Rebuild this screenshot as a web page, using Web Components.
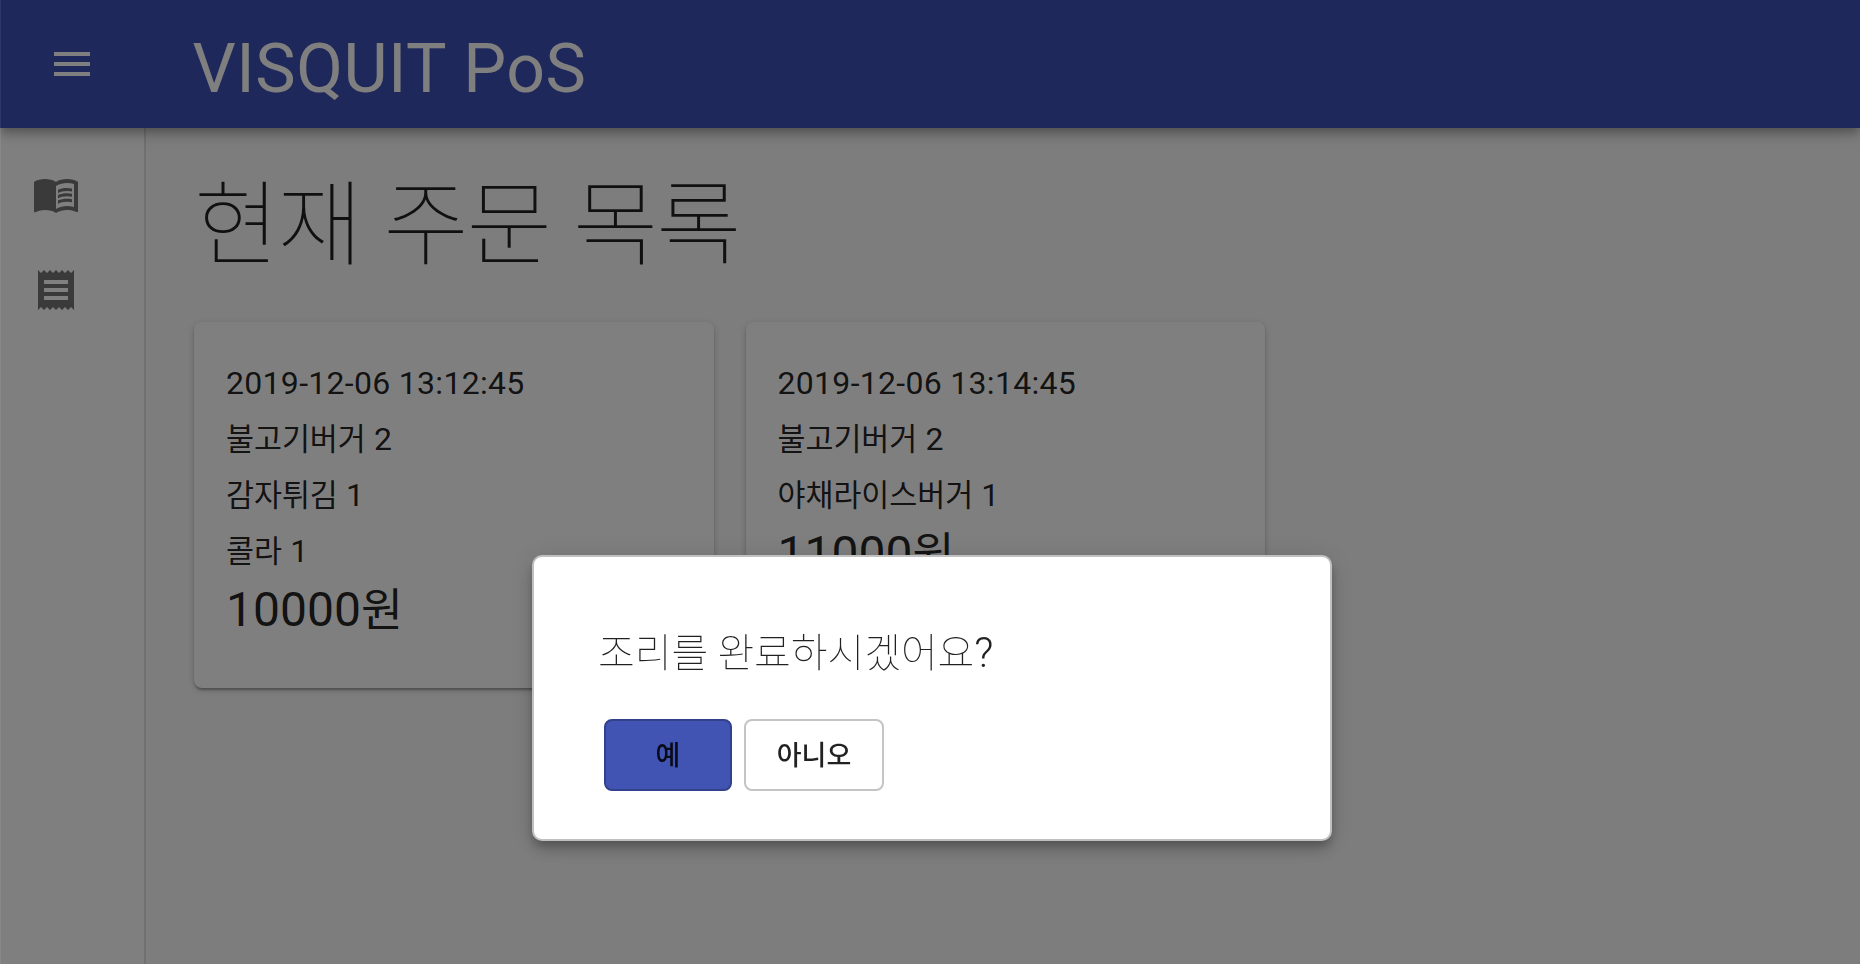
<!DOCTYPE html>
<html lang="ko">
<head>
<meta charset="utf-8">
<title>VISQUIT PoS</title>
<style>
html,body{margin:0;height:100%;overflow:hidden;background:#fafafa}
body{font-family:Roboto,"Noto Sans CJK KR",sans-serif;color:rgba(0,0,0,.87)}
</style>
</head>
<body>
<pos-app>
  <pos-order time="2019-12-06 13:12:45" items="불고기버거:2,감자튀김:1,콜라:1" price="10000"></pos-order>
  <pos-order time="2019-12-06 13:14:45" items="불고기버거:2,야채라이스버거:1" price="11000"></pos-order>
</pos-app>
<pos-dialog>
  <pos-button primary>예</pos-button>
  <pos-button>아니오</pos-button>
</pos-dialog>
<script>
const define = (name, html) => customElements.define(name, class extends HTMLElement {
  constructor() {
    super();
    this.attachShadow({mode: 'open'}).innerHTML = typeof html === 'function' ? '' : html;
  }
  connectedCallback() {
    if (typeof html === 'function') this.shadowRoot.innerHTML = html(this);
  }
});

const icons = {
  menu: '<path d="M3 18h18v-2H3v2zm0-5h18v-2H3v2zm0-7v2h18V6H3z"/>',
  book: '<path fill-rule="evenodd" d="M21 5c-1.11-.35-2.33-.5-3.5-.5-1.95 0-4.05.4-5.5 1.5-1.45-1.1-3.55-1.5-5.5-1.5S2.45 4.9 1 6v14.65c0 .25.25.5.5.5.1 0 .15-.05.25-.05C3.1 20.45 5.05 20 6.5 20c1.95 0 4.05.4 5.5 1.5 1.35-.85 3.8-1.5 5.5-1.5 1.65 0 3.35.3 4.75 1.05.1.05.15.05.25.05.25 0 .5-.25.5-.5V6c-.6-.45-1.25-.75-2-1zm0 13.500c-1.100-.35-2.300-.5-3.500-.5-1.700 0-4.150.65-5.500 1.500V8c1.350-.85 3.800-1.500 5.500-1.500 1.200 0 2.400.15 3.500.5v11.500z"/><path d="M17.500 10.500c.88 0 1.730.09 2.500.26V9.240C19.210 9.090 18.360 9 17.500 9c-1.700 0-3.240.29-4.500.83v1.660c1.130-.64 2.700-.99 4.500-.99zM13 12.490v1.660c1.130-.64 2.700-.99 4.500-.99.88 0 1.730.09 2.500.26V11.900c-.79-.15-1.640-.24-2.500-.24-1.700 0-3.240.3-4.500.83zM17.500 14.330c-1.700 0-3.240.29-4.500.83v1.660c1.130-.64 2.700-.99 4.500-.99.88 0 1.730.09 2.500.26v-1.520c-.79-.16-1.640-.24-2.500-.24z"/>',
  receipt: '<path d="M18 17H6v-2h12v2zm0-4H6v-2h12v2zm0-4H6V7h12v2zM3 22l1.500-1.500L6 22l1.500-1.500L9 22l1.500-1.500L12 22l1.500-1.500L15 22l1.500-1.500L18 22l1.500-1.500L21 22V2l-1.500 1.500L18 2l-1.500 1.500L15 2l-1.500 1.500L12 2l-1.500 1.500L9 2 7.500 3.500 6 2 4.500 3.500 3 2v20z"/>'
};
define('pos-icon', el => `<style>:host{display:block;width:48px;height:48px}svg{display:block;fill:currentColor}</style>
<svg width="48" height="48" viewBox="0 0 24 24">${icons[el.getAttribute('name')]}</svg>`);

define('pos-bar', `<style>
:host{display:flex;align-items:center;height:128px;box-sizing:border-box;padding-left:48px;gap:96.500px;background:#3f51b5;color:#fff;position:relative;z-index:1;
box-shadow:0 4px 8px -2px rgba(0,0,0,.2),0 8px 10px rgba(0,0,0,.14),0 2px 20px rgba(0,0,0,.12)}
h1{margin:0;padding-top:10px;font-weight:400;font-size:68px;line-height:80px;letter-spacing:.00735em}
</style><pos-icon name="menu"></pos-icon><h1>VISQUIT PoS</h1>`);

define('pos-drawer', `<style>
:host{display:flex;flex-direction:column;gap:48px;box-sizing:border-box;width:146px;padding:42px 0 0 32px;background:#fff;border-right:2px solid rgba(0,0,0,.12);color:#757575}
</style><pos-icon name="book"></pos-icon><pos-icon name="receipt"></pos-icon>`);

define('pos-order', el => {
  const rows = el.getAttribute('items').split(',').map(s => s.split(':'));
  return `<style>
:host{display:block;box-sizing:border-box;height:366px;padding:33px 32px 32px;background:#fff;border-radius:8px;
box-shadow:0 2px 6px rgba(0,0,0,.2),0 2px 2px rgba(0,0,0,.14),0 4px 2px -2px rgba(0,0,0,.12)}
p{margin:0;height:56px;line-height:56px;font-size:32px;letter-spacing:.3px;white-space:nowrap}
p.price{height:64px;margin-top:-1px;line-height:64px;font-size:48px;letter-spacing:0}
span{font-family:"Noto Sans CJK KR",sans-serif;font-size:.951em;line-height:1;letter-spacing:-.05px}
</style><p>${el.getAttribute('time')}</p>${rows.map(r => `<p><span>${r[0]}</span> ${r[1]}</p>`).join('')}<p class="price">${el.getAttribute('price')}<span>원</span></p>`;
});

define('pos-app', `<style>
:host{display:flex;flex-direction:column;height:100vh}
.body{flex:1;display:flex}
main{flex:1;padding:46px 48px}
h2{margin:0;height:148px;line-height:88px;font-family:"Noto Sans CJK KR",sans-serif;font-weight:100;font-size:93px;letter-spacing:-2.400px;word-spacing:-.6px;white-space:nowrap}
.grid{display:grid;grid-template-columns:519.500px 519.500px;gap:32px;align-items:start}
</style><pos-bar></pos-bar><div class="body"><pos-drawer></pos-drawer><main><h2>현재 주문 목록</h2><div class="grid"><slot></slot></div></main></div>`);

define('pos-button', `<style>
:host{display:flex;align-items:center;justify-content:center;box-sizing:border-box;width:140px;height:72px;padding-bottom:4px;border:2px solid #c4c4c4;border-radius:8px;
font:500 27px "Noto Sans CJK KR",sans-serif;color:rgba(0,0,0,.87)}
:host([primary]){width:128px;background:#4154b3;border-color:#32418c}
</style><slot></slot>`);

define('pos-dialog', `<style>
:host{position:fixed;inset:0;z-index:10;background:rgba(0,0,0,.5);box-shadow:inset 1px 0 rgba(255,255,255,.07)}
section{position:absolute;left:532px;top:555px;width:800px;height:286px;box-sizing:border-box;padding:64px 64px 60px;background:#fff;border:2px solid #c0c0c0;border-radius:10px;
box-shadow:0 6px 10px -2px rgba(0,0,0,.2),0 10px 16px rgba(0,0,0,.14),0 2px 28px rgba(0,0,0,.12)}
p{margin:0;height:98px;line-height:64px;font-size:42px;font-weight:300;white-space:nowrap}
span{font-family:"Noto Sans CJK KR",sans-serif;font-weight:100;font-size:40px;line-height:1;letter-spacing:-.1px;word-spacing:-1.800px}
.actions{display:flex;gap:12px;padding-left:6px}
</style><section><p><span>조리를 완료하시겠어요</span>?</p><div class="actions"><slot></slot></div></section>`);
</script>
</body>
</html>
